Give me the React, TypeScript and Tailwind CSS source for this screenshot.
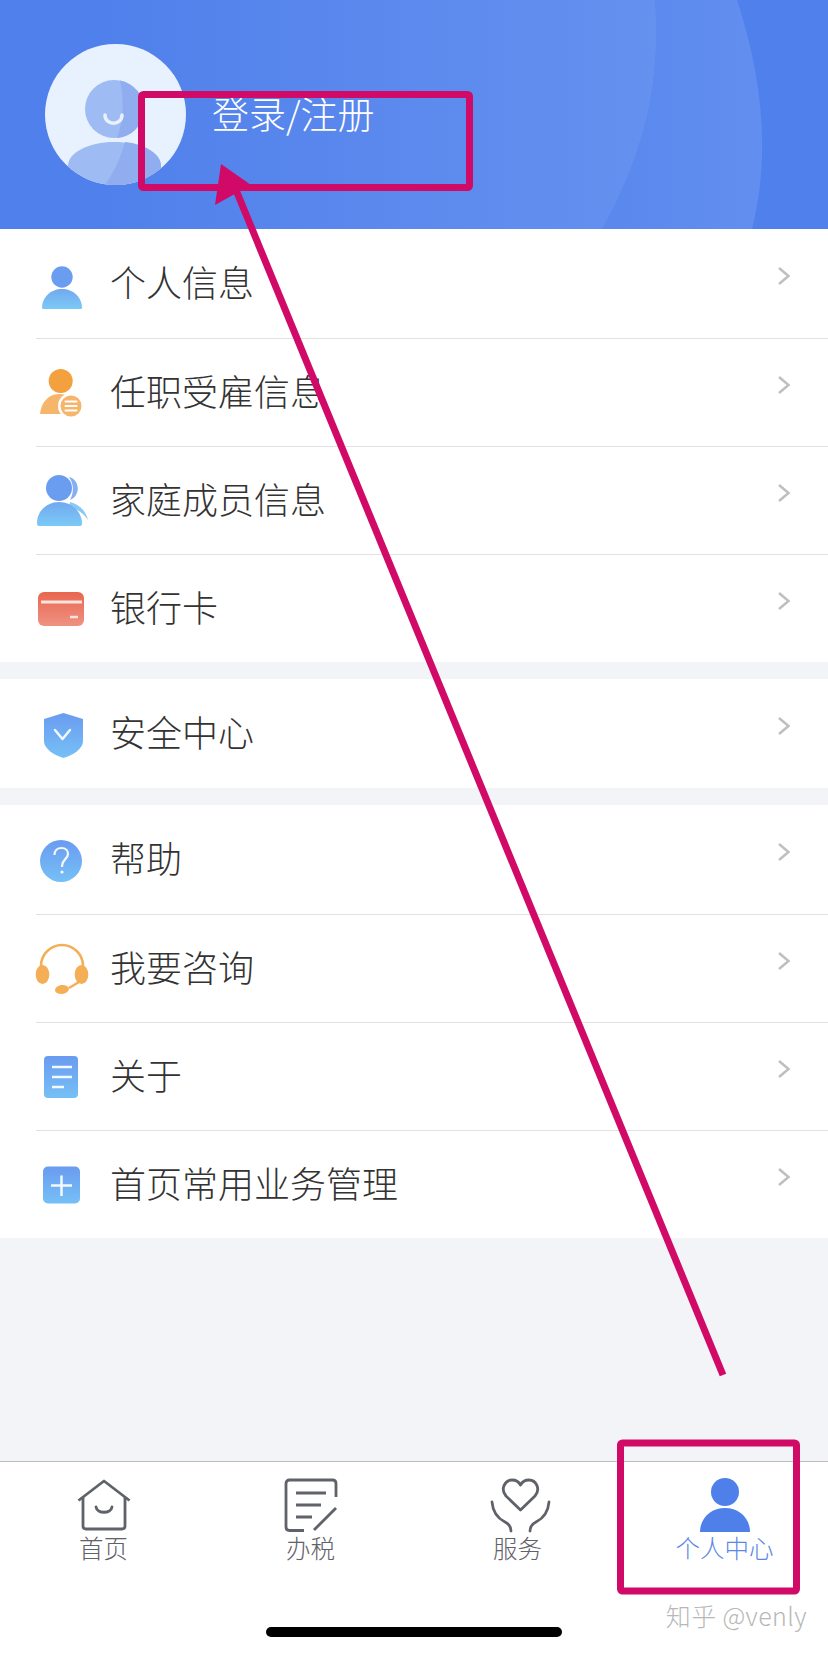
import React from "react";

const CJK = "font-['Noto_Sans_CJK_SC','Noto_Sans',sans-serif]";

function Defs() {
  return (
    <svg width="0" height="0" className="absolute">
      <defs>
        <linearGradient id="blueFade" x1="0" y1="0" x2="0" y2="1">
          <stop offset="0" stopColor="#6a9bf0" />
          <stop offset="1" stopColor="#76c0f6" />
        </linearGradient>
        <linearGradient id="skyBody" x1="0" y1="0" x2="0" y2="1">
          <stop offset="0" stopColor="#72a8f0" />
          <stop offset="1" stopColor="#7bcaf6" />
        </linearGradient>
        <linearGradient id="redFade" x1="0" y1="0" x2="0" y2="1">
          <stop offset="0" stopColor="#e8664f" />
          <stop offset="1" stopColor="#ef9283" />
        </linearGradient>
        <linearGradient id="bannerLeft" gradientUnits="userSpaceOnUse" x1="100" y1="0" x2="660" y2="0">
          <stop offset="0" stopColor="#5080eb" />
          <stop offset="1" stopColor="#6591ef" />
        </linearGradient>
        <linearGradient id="bannerMid" gradientUnits="userSpaceOnUse" x1="620" y1="0" x2="765" y2="0">
          <stop offset="0" stopColor="#5a88ed" />
          <stop offset="1" stopColor="#628fef" />
        </linearGradient>
      </defs>
    </svg>
  );
}

const Box = ({ children }: { children: React.ReactNode }) => (
  <svg width="60" height="60" viewBox="0 0 60 60" className="shrink-0">
    {children}
  </svg>
);

const IconPerson = () => (
  <Box>
    <circle cx="30" cy="23" r="10.7" fill="#6a9df0" />
    <path d="M10 54C10 43 19 35 30 35C41 35 50 43 50 54Q50 55 49 55H11Q10 55 10 54Z" fill="url(#skyBody)" />
  </Box>
);

const IconEmployee = () => (
  <Box>
    <circle cx="28.7" cy="18" r="12" fill="#f3a03f" />
    <path d="M8 51C9 40 16 31 27 31C38 31 44 38 46 51Z" fill="#f5b56a" />
    <circle cx="39" cy="43" r="13" fill="#fff" />
    <circle cx="39" cy="43" r="10.5" fill="#f5b56a" />
    <path d="M33.5 38.5H44.5M33.5 43H44.5M33.5 47.5H44.5" stroke="#fff" strokeWidth="2" strokeLinecap="round" />
  </Box>
);

const IconFamily = () => (
  <Box>
    <path d="M37 6C47 8 50 24 38 29C42 22 42 13 37 6Z" fill="#86aef2" />
    <path d="M38 31C47 33 54 40 56 49C52 43 46 38 37 36Z" fill="#8cc8f6" />
    <circle cx="27" cy="17" r="13" fill="#6a9df0" />
    <path d="M5 52C5 40 15 31 27 31C39 31 50 40 50 53Q50 55 48 55H7Q5 55 5 52Z" fill="url(#skyBody)" />
  </Box>
);

const IconCard = () => (
  <Box>
    <rect x="6" y="13" width="46" height="34" rx="6" fill="url(#redFade)" />
    <path d="M9 23H50" stroke="#fbe3de" strokeWidth="3" />
    <path d="M38 38H46" stroke="#fbe3de" strokeWidth="2.5" />
  </Box>
);

const IconShield = () => (
  <Box>
    <path d="M31.5 9L51 15V37C51 45 41 51 31.5 54C22 51 12 45 12 37V15Z" fill="url(#blueFade)" />
    <path d="M23 26L30.5 35L38 26" fill="none" stroke="#f4f8ff" strokeWidth="2.5" strokeLinecap="round" strokeLinejoin="round" />
  </Box>
);

const IconHelp = () => (
  <Box>
    <circle cx="29" cy="31" r="21" fill="url(#blueFade)" />
    <path d="M22.5 25C22.5 20.5 25.5 18 29.5 18C33.5 18 36 20.5 36 24C36 29 30 29.5 30 36V37" fill="none" stroke="#f4f8ff" strokeWidth="2.2" />
    <circle cx="30" cy="42" r="1.6" fill="#f4f8ff" />
  </Box>
);

const IconHeadset = () => (
  <Box>
    <path d="M9 27A21 21 0 0 1 51 27" fill="none" stroke="#f3ae56" strokeWidth="2.6" />
    <ellipse cx="10.5" cy="35.5" rx="6.8" ry="9.5" fill="#f3ae56" />
    <ellipse cx="49.5" cy="35.5" rx="6.8" ry="9.5" fill="#f3ae56" />
    <path d="M47 43L37 49" stroke="#f3ae56" strokeWidth="2.5" />
    <ellipse cx="30" cy="50.5" rx="7" ry="4.5" fill="#f3ae56" transform="rotate(-8 30 50.5)" />
  </Box>
);

const IconDoc = () => (
  <Box>
    <rect x="12" y="9" width="34" height="42" rx="4" fill="url(#blueFade)" />
    <path d="M20 20H40M20 30H40M20 40H32" stroke="#f4f8ff" strokeWidth="2.5" />
  </Box>
);

const IconPlus = () => (
  <Box>
    <rect x="11" y="11.5" width="37" height="37" rx="5" fill="url(#blueFade)" />
    <path d="M19 30.5H40M29.5 20.5V41" stroke="#f4f8ff" strokeWidth="2.5" />
  </Box>
);

const Row = ({ icon, label, height, last }: { icon: React.ReactNode; label: string; height: string; last?: boolean }) => (
  <div className={`flex items-stretch bg-white pl-[36px] ${height}`}>
    <div className={`flex flex-1 items-center pr-[37px] ${last ? "" : "border-b border-[#e1e1e1]"}`}>
      <div className="-ml-[4px] mr-[18px]">{icon}</div>
      <span className={`mb-[5px] flex-1 text-[36px] font-light leading-[48px] text-[#333333] ${CJK}`}>{label}</span>
      <svg width="14" height="20" viewBox="0 0 14 20" className="mb-[16px]">
        <path d="M2 2L11.5 10L2 18" fill="none" stroke="#bfbfbf" strokeWidth="2.5" />
      </svg>
    </div>
  </div>
);

const Avatar = () => (
  <svg width="141" height="141" viewBox="0 0 141 141" className="shrink-0">
    <defs>
      <clipPath id="avatarClip">
        <circle cx="70.5" cy="70.5" r="70.5" />
      </clipPath>
    </defs>
    <circle cx="70.5" cy="70.5" r="70.5" fill="#e8f1fe" />
    <g clipPath="url(#avatarClip)">
      <circle cx="69" cy="65" r="29" fill="#9fbbf3" />
      <path d="M75 36.5A29 29 0 0 1 72 94C79 76 79 55 75 36.5Z" fill="#8fadef" />
      <path d="M23 141V122C23 108 45 98 69 98C95 98 116 108 116 122V141Z" fill="#9fbbf3" />
      <path d="M60 141C70 127 76 112 80 98C100 100 116 110 116 122V141Z" fill="#8fadef" />
    </g>
    <path d="M60 71C60 82 77 82 77 71" fill="none" stroke="#e8f1fe" strokeWidth="3.5" strokeLinecap="round" />
  </svg>
);

const TabHome = () => (
  <svg width="60" height="56" viewBox="0 0 60 56" fill="none" stroke="#5f6269" strokeWidth="2.8" strokeLinejoin="round">
    <path d="M4.5 22.5L30 3L55.5 22.5" />
    <path d="M9 19V48Q9 51 12 51H48Q51 51 51 48V19" />
    <path d="M22 29C23 36 37 36 38 29" strokeLinecap="round" />
  </svg>
);

const TabTax = () => (
  <svg width="60" height="56" viewBox="0 0 60 56" fill="none" stroke="#5f6269" strokeWidth="2.8" strokeLinejoin="round">
    <path d="M23 52.5H8.5Q5 52.5 5 49V5.5Q5 2 8.5 2H51.5Q55 2 55 5.5V19" />
    <path d="M15 15H45M15 27H40M15 39H31" />
    <path d="M33 52L55 30" />
  </svg>
);

const TabService = () => (
  <svg width="66" height="56" viewBox="0 0 66 56" fill="none" stroke="#5f6269" strokeWidth="2.8" strokeLinecap="round" strokeLinejoin="round">
    <path d="M35.5 32L21 18C15 11 20 2 27 2C31 2 34 4 35.5 7C37 4 40 2 44 2C51 2 56 11 50 18Z" />
    <path d="M7 24C8 36 14 41 20 44C24 46 26 49 26 53" />
    <path d="M64 24C63 36 57 41 51 44C47 46 45 49 45 53" />
  </svg>
);

const TabMine = () => (
  <svg width="60" height="56" viewBox="0 0 60 56">
    <circle cx="30" cy="14" r="14" fill="#4f80ea" />
    <path d="M5 54C5 40 16 30 30 30C44 30 55 40 55 54Z" fill="#4f80ea" />
  </svg>
);

const Tab = ({ icon, label, active }: { icon: React.ReactNode; label: string; active?: boolean }) => (
  <div className="flex flex-1 flex-col items-center">
    <div className="flex h-[55px] items-start justify-center">{icon}</div>
    <span className={`text-[24.5px] font-light leading-[30px] ${CJK} ${active ? "text-[#5a88e6]" : "text-[#5f6269]"}`}>{label}</span>
  </div>
);

export default function App() {
  return (
    <div className="relative flex h-[1653px] w-[828px] flex-col overflow-hidden bg-[#f3f4f8]">
      <Defs />

      {/* Profile banner */}
      <header className="relative flex h-[229px] items-center gap-[26px] overflow-hidden bg-[#5080eb] pl-[45px]">
        <svg width="828" height="229" viewBox="0 0 828 229" className="absolute inset-0">
          <path d="M737 0C760 70 772 150 752 229H602C640 160 662 90 655 0Z" fill="url(#bannerMid)" />
          <path d="M655 0C662 90 640 160 602 229H0V0Z" fill="url(#bannerLeft)" />
        </svg>
        <div className="relative"><Avatar /></div>
        <span className={`relative mb-[4px] text-[37px] font-light leading-[48px] text-white ${CJK}`}>登录/注册</span>
      </header>

      <section>
        <Row height="h-[110px]" icon={<IconPerson />} label="个人信息" />
        <Row height="h-[108px]" icon={<IconEmployee />} label="任职受雇信息" />
        <Row height="h-[108px]" icon={<IconFamily />} label="家庭成员信息" />
        <Row height="h-[107px]" icon={<IconCard />} label="银行卡" last />
      </section>

      <section className="mt-[17px]">
        <Row height="h-[109px]" icon={<IconShield />} label="安全中心" last />
      </section>

      <section className="mt-[17px]">
        <Row height="h-[110px]" icon={<IconHelp />} label="帮助" />
        <Row height="h-[108px]" icon={<IconHeadset />} label="我要咨询" />
        <Row height="h-[108px]" icon={<IconDoc />} label="关于" />
        <Row height="h-[107px]" icon={<IconPlus />} label="首页常用业务管理" last />
      </section>

      {/* Bottom navigation */}
      <nav className="mt-auto flex h-[192px] flex-col border-t border-[#bdbdc3] bg-white pt-[16px]">
        <div className="flex">
          <Tab icon={<TabHome />} label="首页" />
          <Tab icon={<TabTax />} label="办税" />
          <Tab icon={<TabService />} label="服务" />
          <Tab icon={<TabMine />} label="个人中心" active />
        </div>
        <div className="mx-auto mb-[16px] mt-auto h-[10px] w-[296px] rounded-full bg-black" />
      </nav>

      {/* Hand-drawn callouts on top of the page */}
      <svg width="828" height="1653" viewBox="0 0 828 1653" className="pointer-events-none absolute inset-0">
        <rect x="141.5" y="94.5" width="328" height="93" rx="2" fill="none" stroke="#d00a66" strokeWidth="7" />
        <rect x="620.5" y="1443" width="176" height="148" rx="2" fill="none" stroke="#d00a66" strokeWidth="7" />
        <path d="M723 1375L236 190" stroke="#d00a66" strokeWidth="7" />
        <polygon points="221,164 215,205 251,185" fill="#d00a66" />
      </svg>

      <span className={`absolute bottom-[23px] right-[21px] text-[25px] font-light leading-[30px] tracking-[0.4px] text-[#b8b8b8] ${CJK}`}>知乎 @venly</span>
    </div>
  );
}
